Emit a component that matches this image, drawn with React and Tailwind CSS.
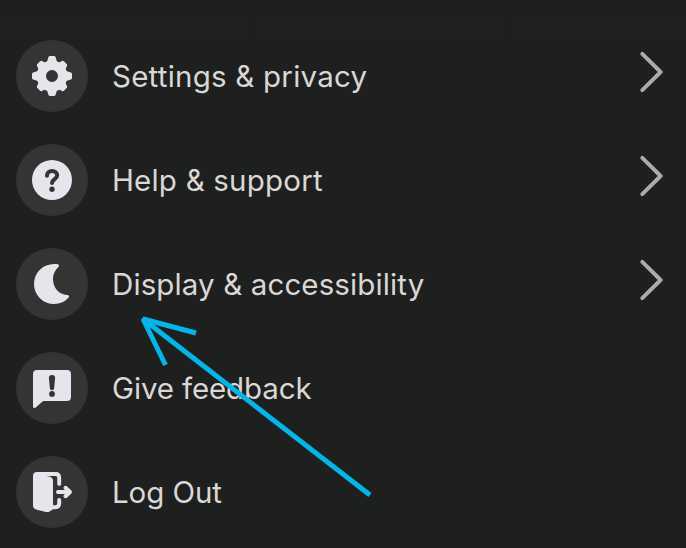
import React from "react";

function Gear() {
  return (
    <g>
      <circle cx="36" cy="36" r="10.7" fill="none" stroke="#e4e6eb" strokeWidth="9.4" />
      {[0, 45, 90, 135, 180, 225, 270, 315].map((a) => (
        <path
          key={a}
          transform={`rotate(${a} 36 36)${a % 90 ? " translate(0 1.2)" : ""}`}
          d="M30.8 22.5 L32.4 17.2 Q32.8 16 34 16 H38 Q39.2 16 39.6 17.2 L41.2 22.5 Z"
        />
      ))}
    </g>
  );
}

function Question() {
  return (
    <g>
      <circle cx="36" cy="36" r="20" />
      <path d="M31 31.8C31 28.8 33.2 27 36 27C39 27 41.2 28.8 41.2 31.5C41.2 34.8 36.4 35 36 39" fill="none" stroke="#333534" strokeWidth="4" strokeLinecap="round" />
      <circle cx="36" cy="45.2" r="2.7" fill="#333534" />
    </g>
  );
}

function Moon() {
  return <path d="M41.8 16.3C43.2 16.6 43.5 17.8 42.6 18.8C38.8 22.3 37 26.3 37 31C37 40 43.2 46.6 51 47C53 47 53.6 48 52.6 49.6C49 53.9 44 56 38 56A20 20 0 0 1 38 16C39.5 16 40.8 16.1 41.8 16.3Z" />;
}

function Feedback() {
  return (
    <g>
      <path d="M21 18H51A4 4 0 0 1 55 22V45A4 4 0 0 1 51 49H28Q27 49 26.2 49.7L19.8 55.4Q17 57.3 17 54V22A4 4 0 0 1 21 18Z" />
      <path d="M36 23C38 23 39.2 24 39.1 26L38.1 36.4Q37.8 38.2 36 38.2Q34.2 38.2 33.9 36.4L32.9 26C32.8 24 34 23 36 23Z" fill="#333534" />
      <circle cx="36" cy="41.9" r="2.9" fill="#333534" />
    </g>
  );
}

function LogOut() {
  return (
    <g>
      <path d="M21 16H30V20L33 20.6Q37 21.5 37 25V52Q37 53.5 35.6 54.3L33.6 55.5Q32 56.4 30 55.9L20 53.4Q17 52.5 17 49.5V20Q17 16 21 16Z" />
      <path d="M27 18H39.5Q43.2 18 43.2 21.7V27.9M43.2 44V47.5Q43.2 51 39.5 51.2H36" fill="none" stroke="#e4e6eb" strokeWidth="3.9" strokeLinecap="round" />
      <path d="M42 36H54M49.5 31.8L54 36L49.5 40.2" fill="none" stroke="#e4e6eb" strokeWidth="4" strokeLinecap="round" strokeLinejoin="round" />
    </g>
  );
}

const rows = [
  { label: "Settings & privacy", Icon: Gear, more: true, tracking: "tracking-[0.23px]" },
  { label: "Help & support", Icon: Question, more: true, tracking: "tracking-[0.2px]" },
  { label: "Display & accessibility", Icon: Moon, more: true, tracking: "tracking-[0.12px]" },
  { label: "Give feedback", Icon: Feedback, more: false, tracking: "tracking-[-0.13px]" },
  { label: "Log Out", Icon: LogOut, more: false, tracking: "tracking-[-0.08px]" },
];

export default function App() {
  return (
    <main className="relative h-[548px] w-[686px] overflow-hidden bg-[#1e201f] font-['Inter',sans-serif]">
      <div className="h-10 bg-linear-to-b from-[#1c1e1d] to-[#1e201f] to-40%" />
      <ul className="flex flex-col gap-8 pl-4 pr-[22px]">
        {rows.map(({ label, Icon, more, tracking }) => (
          <li key={label} className="flex h-[72px] items-center">
            <div className="size-[72px] shrink-0 rounded-full bg-[#333534]">
              <svg viewBox="0 0 72 72" className="size-full" fill="#e4e6eb">
                <Icon />
              </svg>
            </div>
            <span className={`ml-6 flex-1 whitespace-nowrap text-[29.5px] font-[430] leading-9 text-[#dad7d5] ${tracking}`}>{label}</span>
            {more && (
              <svg viewBox="0 0 24 44" className="mb-2 h-11 w-6 shrink-0" fill="none" stroke="#a9abaf" strokeWidth="3.9" strokeLinecap="round" strokeLinejoin="round">
                <path d="M2.3 3.8L20.6 22L2.3 40.2" />
              </svg>
            )}
          </li>
        ))}
      </ul>
      <svg viewBox="0 0 686 548" className="pointer-events-none absolute inset-0" fill="none" stroke="#06b5e8" strokeWidth="5">
        <path d="M370 495L143 319M196 333L143 319L165.5 365" strokeLinejoin="bevel" />
      </svg>
    </main>
  );
}
